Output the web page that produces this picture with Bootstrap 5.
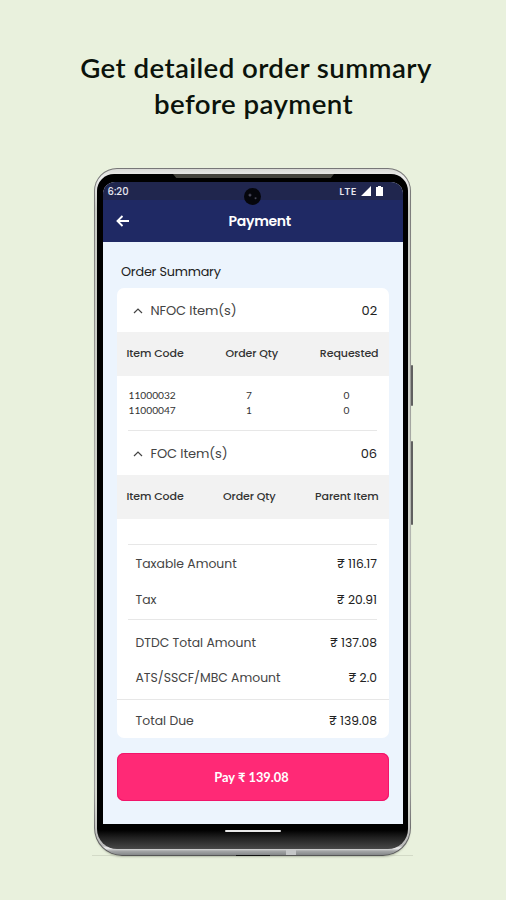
<!DOCTYPE html>
<html lang="en">
<head>
<meta charset="utf-8">
<meta name="viewport" content="width=device-width, initial-scale=1">
<title>Order summary</title>
<link href="https://cdn.jsdelivr.net/npm/bootstrap@5.3.0/dist/css/bootstrap.min.css" rel="stylesheet">
<style>
body{background:#e9f1dd;font-family:Poppins,Inter,"Open Sans",sans-serif;height:900px;overflow:hidden;color:#333}
.headline{font-family:Lato,sans-serif;font-weight:600;font-size:27.7px;line-height:36px;padding:50px 0 0 6px;height:168px;color:#0b130b;letter-spacing:.4px;margin:0}
.headline span{margin-left:-5px}
.phone{width:317px;height:688px;margin-left:94px;border-radius:23px 23px 28px 28px;padding:1px;background:linear-gradient(#777 0,#8d8d8a 20%,#b5b8b2 50%,#999 90%,#555 100%);box-shadow:0 2px 2px -1px #b4bba7}
.rim{height:686px;border-radius:22px 22px 27px 27px;padding:5px 2px 6px;background:linear-gradient(#d9dad6 0,#eee 8px,#c9ccc5 40px,#d5d8d0 92%,#bbb 677px,#f0f0f0 679px,#a5a7a8 682px,#85888a 686px)}
.bezel{height:675px;border-radius:17px 17px 20px 20px;padding:8px 5px 0 5.5px;background:linear-gradient(#000 0,#000 656px,#222 664px,#484848 675px)}
.topbar{left:79px;top:6px;width:161px;height:4px;background:#45443e;clip-path:polygon(0 0,100% 0,98% 100%,2% 100%)}
.port{left:192px;top:682px;width:10px;height:5px;background:#c5c7c8}
.foot-line{left:142px;top:687px;width:34px;height:1px;background:#111}
.ground{left:-2px;top:687px;width:321px;height:1px;background:#d3dac7;z-index:-1}
.screen{height:642px;border-radius:12px 12px 0 0;background:#ecf4fd;overflow:hidden}
.status{height:18px;background:#20264e;color:#e8e8ef;font-size:10px;font-weight:500;padding:0 19.5px 0 5px}
.lte{font-size:11px;letter-spacing:.1px}
.appbar{height:42px;background:#1f2964;color:#fff;font-size:14px;font-weight:600;display:grid;grid-template-columns:54px 1fr 40px;align-items:center;letter-spacing:-.3px}
.appbar span{padding-top:1px}
.appbar svg{margin-left:13px}
.camera{left:150px;top:20px;width:17px;height:17px;border-radius:50%;background:radial-gradient(circle at 35% 42%,#667 0,#334 1px,transparent 2px),radial-gradient(circle at 68% 60%,#556 0,transparent 1.5px),#05060c}
.side{width:2px;background:#606060;border-radius:1px;left:317px}
.title-row{height:46px;padding:17px 0 0 18.5px;font-size:12.8px;letter-spacing:-.2px;color:#222;line-height:26px}
.summary{width:272px;height:450px;margin-left:14px;border:0;border-radius:7px;overflow:hidden;color:#333}
.summary>*{flex-shrink:0}
.grp{height:44px;padding:1px 11.5px 0 16px;font-size:13px;letter-spacing:-.12px;color:#444}
.grp svg{margin-right:8px}
.band{height:44px;background:#f2f2f2;font-size:11px;letter-spacing:-.08px;color:#333;font-weight:500;padding:0 10px 1px}
.items{height:54px;padding:12px 0 0 12px;font-family:Lato,sans-serif;font-size:10.2px;line-height:14.5px;display:grid;grid-template-columns:104px 33px 162px;grid-auto-rows:14.5px}
.items span:not(:nth-child(3n+1)){text-align:center}
.rule{height:1px;background:#e7e7e7;margin:0 11.5px}
.gap-row{height:25px}
.amt{font-size:12.4px;padding:2px 11.5px 0 19px;color:#444}
.amt b,.grp b{font-weight:400;color:#222}
.amt b{font-size:12.3px}
.h-taxable{height:37px}.h-tax{height:37px;padding-bottom:3px}.h-total{height:45px}.h-ats{height:34px;padding-bottom:9px}.h-due{height:38px;padding-top:5px}
.pay{width:272px;height:48px;margin:15px 0 0 14px;border:0;border-radius:7px;background:#ff2976;color:#fff;font:700 12.8px Lato,sans-serif;letter-spacing:.02px;box-shadow:inset 0 0 0 1px #f1146a;padding:0 2px 1px 0}
.homebar{width:56px;height:2px;background:#e8e8e8;margin:6px auto 0;border-radius:1px}
</style>
</head>
<body>
<h1 class="headline text-center">Get detailed order summary<br><span>before payment</span></h1>
<main class="phone position-relative">
  <div class="rim"><div class="bezel">
    <div class="screen">
      <div class="status d-flex align-items-center">
        <span class="me-auto">6:20</span><span class="lte">LTE</span>
        <svg class="ms-1" width="23" height="12" viewBox="0 0 23 12" fill="#fff"><path d="M0 11 10 1v10zM15 2h2V1h3v1h2v9h-7z"/></svg>
      </div>
      <header class="appbar"><svg width="14" height="12" viewBox="0 0 14 12" fill="none" stroke="#fff" stroke-width="1.9"><path d="M13 6H2M6.5 1 1.5 6l5 5"/></svg><span class="text-center">Payment</span></header>
      <div class="title-row">Order Summary</div>
      <section class="card summary">
        <div class="grp d-flex align-items-center"><svg width="10" height="6" viewBox="0 0 10 6" fill="none" stroke="#444" stroke-width="1.2"><path d="m1 5 4-4 4 4"/></svg><span>NFOC Item(s)</span><b class="ms-auto">02</b></div>
        <div class="band d-flex align-items-center justify-content-between"><span>Item Code</span><span>Order Qty</span><span>Requested</span></div>
        <div class="items"><span>11000032</span><span>7</span><span>0</span><span>11000047</span><span>1</span><span>0</span></div>
        <div class="rule"></div>
        <div class="grp d-flex align-items-center"><svg width="10" height="6" viewBox="0 0 10 6" fill="none" stroke="#444" stroke-width="1.2"><path d="m1 5 4-4 4 4"/></svg><span>FOC Item(s)</span><b class="ms-auto">06</b></div>
        <div class="band d-flex align-items-center justify-content-between"><span>Item Code</span><span>Order Qty</span><span>Parent Item</span></div>
        <div class="gap-row"></div>
        <div class="rule"></div>
        <div class="amt h-taxable d-flex align-items-center justify-content-between"><span>Taxable Amount</span><b>₹ 116.17</b></div>
        <div class="amt h-tax d-flex align-items-center justify-content-between"><span>Tax</span><b>₹ 20.91</b></div>
        <div class="rule"></div>
        <div class="amt h-total d-flex align-items-center justify-content-between"><span>DTDC Total Amount</span><b>₹ 137.08</b></div>
        <div class="amt h-ats d-flex align-items-center justify-content-between"><span>ATS/SSCF/MBC Amount</span><b>₹ 2.0</b></div>
        <div class="rule mx-0"></div>
        <div class="amt h-due d-flex align-items-center justify-content-between"><span>Total Due</span><b>₹ 139.08</b></div>
      </section>
      <button class="btn pay" type="button">Pay ₹ 139.08</button>
    </div>
    <div class="homebar"></div>
  </div></div>
  <div class="topbar position-absolute"></div>
  <div class="camera position-absolute"></div>
  <div class="port position-absolute"></div>
  <div class="foot-line position-absolute"></div>
  <div class="ground position-absolute"></div>
  <div class="side position-absolute" style="top:197px;height:41px"></div>
  <div class="side position-absolute" style="top:273px;height:84px"></div>
</main>
<script src="https://cdn.jsdelivr.net/npm/bootstrap@5.3.0/dist/js/bootstrap.bundle.min.js"></script>
</body>
</html>
